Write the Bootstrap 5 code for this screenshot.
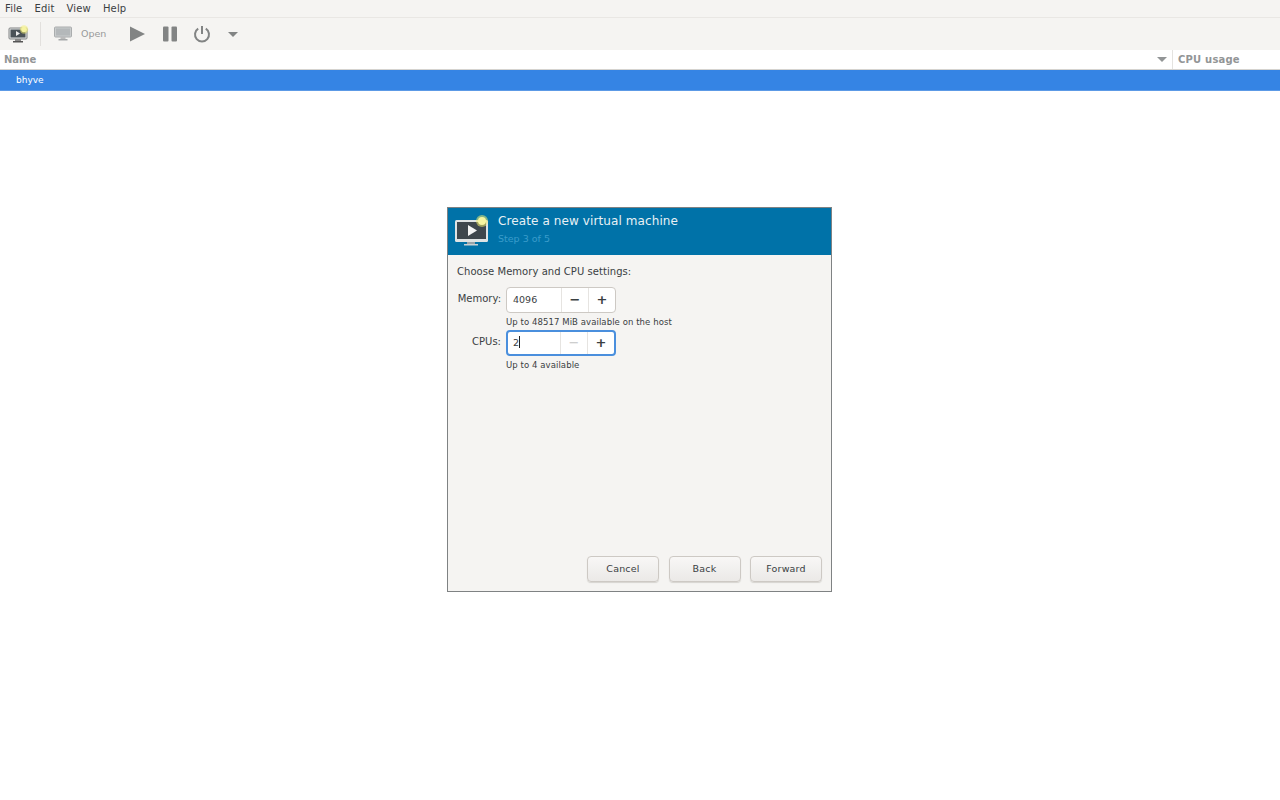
<!DOCTYPE html>
<html lang="en">
  <head>
    <meta charset="UTF-8" />
    <title>Virtual Machine Manager</title>
    <link href="https://cdn.jsdelivr.net/npm/bootstrap@5.3.0/dist/css/bootstrap.min.css" rel="stylesheet" />
    <style>
      html, body { height: 100%; }
      body { font-family: "DejaVu Sans", sans-serif; font-size: 9.5px; color: #3a4042; background: #fff; overflow: hidden; }
      .menu-strip { height: 18px; background: #f5f4f2; border-bottom: 1px solid #e9e7e4; padding-left: 5px; gap: 12px; font-size: 10px; line-height: 17px; letter-spacing: .17px; }
      .tool-strip { height: 32px; background: #f5f4f2; }
      .tool-sep { width: 1px; height: 24px; background: #e2e0dd; margin: 0 13px 0 11px; }
      .tool-open { color: #98999a; margin: 0 23px 0 9px; font-size: 9.5px; }
      .tool-pause { margin-left: 18px; }
      .tool-arrow { margin-left: 17px; }
      .col-head { height: 20px; border-bottom: 1px solid #d5d3cf; color: #929596; font-weight: 700; font-size: 10px; line-height: 19px; }
      .col-name { width: 1172px; padding-left: 4px; }
      .col-cpu { padding-left: 5px; border-left: 1px solid #e4e3e0; letter-spacing: .2px; }
      .sort-arrow { width: 0; height: 0; border-left: 5px solid transparent; border-right: 5px solid transparent; border-top: 5px solid #929596; margin: 7px 5px 0 auto; }
      .vm-row { height: 21px; background: #3584e4; color: #fff; padding-left: 16px; line-height: 20px; font-size: 9px; border-bottom: 1px solid #5c9ae6; }
      .wizard-window { position: absolute; left: 447px; top: 207px; width: 385px; height: 385px; border: 1px solid #7f8283; background: #f5f4f2; }
      .wizard-head { height: 47px; background: #0072a8; padding-left: 7px; }
      .wizard-title { color: #e8f1f5; font-size: 12px; line-height: 15px; margin-top: 6px; letter-spacing: .1px; }
      .wizard-step { color: #3a9ccb; font-size: 9.5px; line-height: 12px; margin-top: 4px; }
      .wizard-body { padding: 11px 9px 0; }
      .wizard-intro { font-size: 10px; line-height: 12px; margin-bottom: 9px; letter-spacing: .05px; }
      .field-label { width: 44px; text-align: right; margin-right: 5px; font-size: 10px; line-height: 12px; padding-top: 6px; }
      .spin-box { width: 110px; height: 26px; background: #fff; border: 1px solid #cdc9c4; border-radius: 4px; }
      .spin-box.is-active { border: 2px solid #4a8fdd; }
      .spin-value { flex: 1; padding-left: 6px; line-height: 24px; font-size: 9.5px; }
      .spin-box.is-active .spin-value { padding-left: 5px; line-height: 22px; }
      .spin-caret { display: inline-block; width: 1px; height: 12px; background: #222; vertical-align: -2px; }
      .spin-btn { width: 27px; border-left: 1px solid #e6e4e1; font-size: 13px; font-weight: 700; color: #3a4042; }
      .spin-btn.is-off { color: #c4c5c5; font-weight: 400; }
      .field-hint { margin-left: 49px; font-size: 8.5px; line-height: 11px; margin-top: 4px; letter-spacing: .08px; }
      .field-gap { margin-top: 2px; }
      .wizard-foot { position: absolute; right: 9px; bottom: 9px; gap: 9.5px; }
      .wizard-btn { width: 72px; height: 26px; border: 1px solid #cdc9c4; border-radius: 4px; background: linear-gradient(#f8f7f6, #ebe9e7); box-shadow: 0 1px 1px #d6d4d0; font-size: 9.5px; line-height: 24px; text-align: center; letter-spacing: .2px; }
    </style>
  </head>
  <body>
    <!-- Menu -->
    <div class="menu-strip d-flex">
      <span>File</span><span>Edit</span><span>View</span><span>Help</span>
    </div>

    <!-- Toolbar -->
    <div class="tool-strip d-flex align-items-center">
      <svg class="ms-2" width="21" height="19" viewBox="0 0 21 19">
        <rect x="1" y="3" width="18" height="11" rx="1" fill="#e4e6e6" stroke="#808384" />
        <rect x="2.5" y="4.5" width="15" height="8" fill="#4a5258" />
        <path d="M8 6l4 2.5-4 2.5z" fill="#eee" />
        <rect x="7" y="14" width="6" height="2" fill="#888" />
        <rect x="5" y="16" width="10" height="1.5" fill="#555" />
        <circle cx="16" cy="4.5" r="4.2" fill="#f2ee6b" opacity=".5" />
        <circle cx="16" cy="4.5" r="2.8" fill="#f6f3a0" />
      </svg>
      <div class="tool-sep"></div>
      <svg width="18" height="16" viewBox="0 0 18 16">
        <rect x="0.5" y="1" width="17" height="10" rx="1" fill="#c9cccd" stroke="#aaadae" />
        <rect x="2" y="2.5" width="14" height="7" fill="#b4b8ba" />
        <rect x="6.5" y="11" width="5" height="2" fill="#bbb" />
        <rect x="4.5" y="13" width="9" height="1.5" fill="#a6a8a9" />
      </svg>
      <span class="tool-open">Open</span>
      <svg width="16" height="16" viewBox="0 0 16 16"><path d="M1 0.5l15 7.5-15 7.5z" fill="#828484" /></svg>
      <svg class="tool-pause" width="14" height="16" viewBox="0 0 14 16"><rect x="0" y="0.5" width="5.5" height="15" rx="1" fill="#828484" /><rect x="8.5" y="0.5" width="5.5" height="15" rx="1" fill="#828484" /></svg>
      <svg class="ms-3" width="18" height="18" viewBox="0 0 18 18" fill="none" stroke="#828484" stroke-width="2"><path d="M5.2 3.6a7 7 0 1 0 7.6 0" /><path d="M9 1v8" /></svg>
      <svg class="tool-arrow" width="10" height="5" viewBox="0 0 10 5"><path d="M0 0h10l-5 5z" fill="#828484" /></svg>
    </div>

    <!-- VM list -->
    <div class="col-head d-flex">
      <div class="col-name d-flex"><span>Name</span><span class="sort-arrow"></span></div>
      <div class="col-cpu">CPU usage</div>
    </div>
    <div class="vm-row">bhyve</div>

    <!-- New VM wizard window -->
    <div class="wizard-window">
      <div class="wizard-head d-flex">
        <svg class="me-2 mt-1" width="35" height="36" viewBox="0 0 35 36">
          <rect x="0" y="8" width="33" height="22" rx="1.5" fill="#dfe3e4" />
          <rect x="2" y="10" width="29" height="17" fill="#3f474d" />
          <path d="M13 13l9 5.5-9 5.5z" fill="#f4f4f4" />
          <rect x="12" y="30" width="8" height="2" fill="#9aa3a8" />
          <rect x="9" y="32" width="14" height="1.5" fill="#c9d0d3" />
          <circle cx="27" cy="9" r="6" fill="#f0ed6e" opacity=".55" />
          <circle cx="27" cy="9" r="4" fill="#f8f6a0" />
        </svg>
        <div>
          <div class="wizard-title">Create a new virtual machine</div>
          <div class="wizard-step">Step 3 of 5</div>
        </div>
      </div>
      <div class="wizard-body">
        <div class="wizard-intro">Choose Memory and CPU settings:</div>
        <div class="d-flex">
          <div class="field-label">Memory:</div>
          <div class="spin-box d-flex">
            <div class="spin-value">4096</div>
            <div class="spin-btn d-flex align-items-center justify-content-center">−</div>
            <div class="spin-btn d-flex align-items-center justify-content-center">+</div>
          </div>
        </div>
        <div class="field-hint">Up to 48517 MiB available on the host</div>
        <div class="d-flex field-gap">
          <div class="field-label">CPUs:</div>
          <div class="spin-box is-active d-flex">
            <div class="spin-value">2<span class="spin-caret"></span></div>
            <div class="spin-btn is-off d-flex align-items-center justify-content-center">−</div>
            <div class="spin-btn d-flex align-items-center justify-content-center">+</div>
          </div>
        </div>
        <div class="field-hint">Up to 4 available</div>
      </div>
      <div class="wizard-foot d-flex">
        <div class="wizard-btn">Cancel</div>
        <div class="wizard-btn">Back</div>
        <div class="wizard-btn">Forward</div>
      </div>
    </div>

    <script src="https://cdn.jsdelivr.net/npm/bootstrap@5.3.0/dist/js/bootstrap.bundle.min.js"></script>
  </body>
</html>
